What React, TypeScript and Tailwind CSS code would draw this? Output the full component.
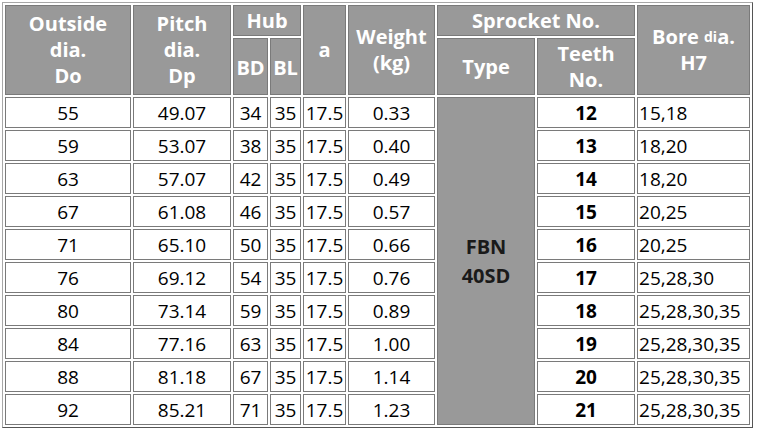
import React from "react";

const rows = [
  ["55", "49.07", "34", "35", "17.5", "0.33", "12", "15,18"],
  ["59", "53.07", "38", "35", "17.5", "0.40", "13", "18,20"],
  ["63", "57.07", "42", "35", "17.5", "0.49", "14", "18,20"],
  ["67", "61.08", "46", "35", "17.5", "0.57", "15", "20,25"],
  ["71", "65.10", "50", "35", "17.5", "0.66", "16", "20,25"],
  ["76", "69.12", "54", "35", "17.5", "0.76", "17", "25,28,30"],
  ["80", "73.14", "59", "35", "17.5", "0.89", "18", "25,28,30,35"],
  ["84", "77.16", "63", "35", "17.5", "1.00", "19", "25,28,30,35"],
  ["88", "81.18", "67", "35", "17.5", "1.14", "20", "25,28,30,35"],
  ["92", "85.21", "71", "35", "17.5", "1.23", "21", "25,28,30,35"],
];

const th = "bg-[#999999] border border-[#7a7a7a] text-white font-bold text-[20px] leading-[26px] text-center align-middle p-0";
const td = "bg-white border border-[#7a7a7a] text-black text-[19px] leading-[24px] text-center align-middle p-0 h-[31px]";

export default function App() {
  return (
    <div className="w-[758px] h-[447px] bg-white pt-[2px] pl-[2px]" style={{ fontFamily: '"Open Sans", "Noto Sans", sans-serif' }}>
      <table className="table-fixed border-separate border-spacing-[2px] w-[751px] border border-t-[#a8a8a8] border-l-[#a8a8a8] border-r-[#555555] border-b-[#555555]">
        <colgroup>
          <col className="w-[126px]" />
          <col className="w-[98px]" />
          <col className="w-[35px]" />
          <col className="w-[31px]" />
          <col className="w-[43px]" />
          <col className="w-[87px]" />
          <col className="w-[98px]" />
          <col className="w-[98px]" />
          <col className="w-[113px]" />
        </colgroup>
        <thead>
          <tr>
            <th rowSpan={2} className={th}>
              Outside<br />dia.<br />Do
            </th>
            <th rowSpan={2} className={th}>
              Pitch<br />dia.<br />Dp
            </th>
            <th colSpan={2} className={th + " h-[31px]"}>Hub</th>
            <th rowSpan={2} className={th}>a</th>
            <th rowSpan={2} className={th}>
              Weight<br />(kg)
            </th>
            <th colSpan={2} className={th}>Sprocket No.</th>
            <th rowSpan={2} className={th}>
              Bore <sup className="text-[14px] leading-none relative -top-[2px]">di</sup>a.<br />H7
            </th>
          </tr>
          <tr>
            <th className={th + " h-[57px] pt-[2px]"}>BD</th>
            <th className={th + " pt-[2px]"}>BL</th>
            <th className={th}>Type</th>
            <th className={th}>
              Teeth<br />No.
            </th>
          </tr>
        </thead>
        <tbody>
          {rows.map((r, i) => (
            <tr key={i}>
              <td className={td}>{r[0]}</td>
              <td className={td}>{r[1]}</td>
              <td className={td}>{r[2]}</td>
              <td className={td}>{r[3]}</td>
              <td className={td}>{r[4]}</td>
              <td className={td}>{r[5]}</td>
              {i === 0 && (
                <td rowSpan={10} className="bg-[#999999] border border-[#7a7a7a] text-[#1a1a1a] font-bold text-[20px] leading-[29px] text-center align-middle p-0">
                  FBN<br />40SD
                </td>
              )}
              <td className={td + " font-bold"}>{r[6]}</td>
              <td className={td + " text-left pl-[1px]"}>{r[7]}</td>
            </tr>
          ))}
        </tbody>
      </table>
    </div>
  );
}
